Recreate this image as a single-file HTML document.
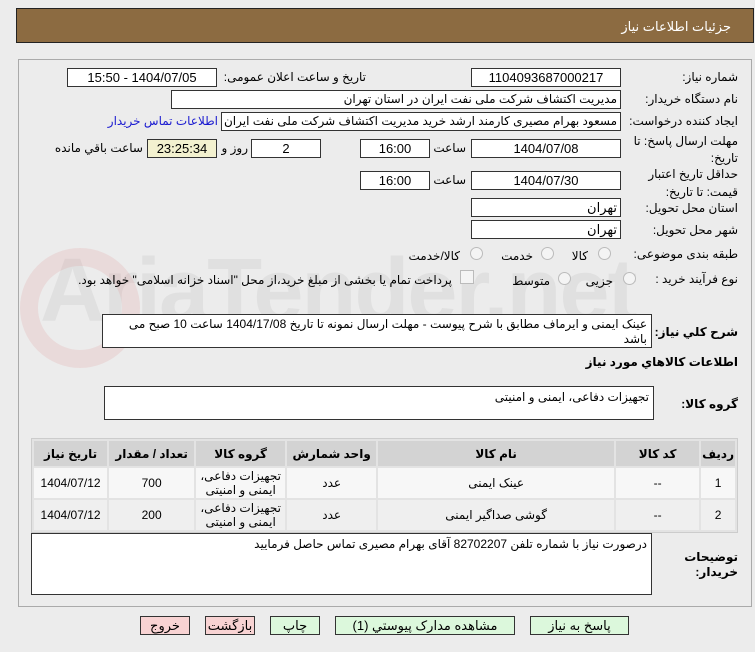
<!DOCTYPE html>
<html dir="rtl"><head><meta charset="utf-8"><style>
body{margin:0;width:755px;height:652px;background:#ececec;font-family:"Liberation Sans","DejaVu Sans",sans-serif;font-size:12px;color:#000;position:relative;overflow:hidden}
.a{position:absolute;white-space:nowrap}
.box{position:absolute;background:#fff;border:1px solid #333;box-sizing:border-box;height:19px;line-height:17px;text-align:center;font-size:13px}
.lbl{position:absolute;white-space:nowrap;font-size:12px;text-align:right}
.b{font-weight:bold}
.ta{position:absolute;background:#fff;border:1px solid #333;box-sizing:border-box;padding:2px 4px;font-size:12px;text-align:right;direction:rtl;line-height:16px}
.rad{position:absolute;width:11px;height:11px;border:1px solid #bbb;border-radius:50%;background:#f4f4f4}
table{position:absolute;left:31px;top:438px;width:707px;border-collapse:separate;border-spacing:2px;background:#e3e3e3;border:1px solid #ccc;direction:rtl;font-size:12px}
th{background:#d3d3d3;height:23px;font-weight:bold}
td{background:#f7f7f7;height:28px;text-align:center;line-height:14px}
tr.r2 td{background:#efefef}
.btn{position:absolute;top:616px;height:19px;border:1px solid #333;box-sizing:border-box;text-align:center;line-height:17px;font-size:13px}
</style></head><body>
<div class="a" style="left:16px;top:8px;width:738px;height:35px;background:#8c6b41;border:1px solid #222;box-sizing:border-box"></div>
<div class="a" style="right:24px;top:19px;color:#fff;font-size:13px">جزئیات اطلاعات نیاز</div>
<div class="a" style="left:18px;top:59px;width:734px;height:548px;border:1px solid #aaa;box-sizing:border-box"></div>
<div class="a" style="left:40px;top:240px;font-size:90px;font-weight:bold;color:rgba(180,180,180,0.2);direction:ltr;letter-spacing:-2px">AriaTender.net</div>
<div class="a" style="left:20px;top:248px;width:120px;height:120px;border:18px solid rgba(220,120,120,0.15);border-radius:50%;box-sizing:border-box"></div>

<div class="lbl" style="right:17px;top:70px">شماره نیاز:</div>
<div class="box" style="left:471px;top:68px;width:150px">1104093687000217</div>
<div class="lbl" style="right:389px;top:70px">تاریخ و ساعت اعلان عمومی:</div>
<div class="box" style="left:67px;top:68px;width:150px">1404/07/05 - 15:50</div>

<div class="lbl" style="right:17px;top:92px">نام دستگاه خریدار:</div>
<div class="box" style="left:171px;top:90px;width:450px;text-align:right;padding-right:3px;font-size:12px">مدیریت اکتشاف شرکت ملی نفت ایران در استان تهران</div>

<div class="lbl" style="right:17px;top:114px">ایجاد کننده درخواست:</div>
<div class="box" style="left:221px;top:112px;width:400px;text-align:right;padding-right:3px;overflow:hidden;font-size:12px">مسعود بهرام مصیری کارمند ارشد خرید مدیریت اکتشاف شرکت ملی نفت ایران در</div>
<div class="lbl" style="right:537px;top:114px;color:#1a1ad0">اطلاعات تماس خریدار</div>

<div class="lbl" style="right:17px;top:133px;line-height:17px">مهلت ارسال پاسخ: تا<br>تاریخ:</div>
<div class="box" style="left:471px;top:139px;width:150px">1404/07/08</div>
<div class="lbl" style="right:289px;top:141px">ساعت</div>
<div class="box" style="left:360px;top:139px;width:70px">16:00</div>
<div class="box" style="left:251px;top:139px;width:70px">2</div>
<div class="lbl" style="right:507px;top:141px">روز و</div>
<div class="box" style="left:147px;top:139px;width:70px;background:#f3f1cf">23:25:34</div>
<div class="lbl" style="right:612px;top:141px">ساعت باقي مانده</div>

<div class="lbl" style="right:17px;top:165px;line-height:18px">حداقل تاریخ اعتبار<br>قیمت: تا تاریخ:</div>
<div class="box" style="left:471px;top:171px;width:150px">1404/07/30</div>
<div class="lbl" style="right:289px;top:173px">ساعت</div>
<div class="box" style="left:360px;top:171px;width:70px">16:00</div>

<div class="lbl" style="right:17px;top:201px">استان محل تحویل:</div>
<div class="box" style="left:471px;top:198px;width:150px;text-align:right;padding-right:3px">تهران</div>
<div class="lbl" style="right:17px;top:223px">شهر محل تحویل:</div>
<div class="box" style="left:471px;top:220px;width:150px;text-align:right;padding-right:3px">تهران</div>

<div class="lbl" style="right:17px;top:247px">طبقه بندی موضوعی:</div>
<div class="rad" style="left:598px;top:247px"></div><div class="lbl" style="right:167px;top:249px">کالا</div>
<div class="rad" style="left:541px;top:247px"></div><div class="lbl" style="right:222px;top:249px">خدمت</div>
<div class="rad" style="left:470px;top:247px"></div><div class="lbl" style="right:295px;top:249px">کالا/خدمت</div>

<div class="lbl" style="right:17px;top:272px">نوع فرآیند خرید :</div>
<div class="rad" style="left:623px;top:272px"></div><div class="lbl" style="right:142px;top:274px">جزیی</div>
<div class="rad" style="left:558px;top:272px"></div><div class="lbl" style="right:205px;top:274px">متوسط</div>
<div class="a" style="left:460px;top:270px;width:12px;height:12px;border:1px solid #bbb;background:#f4f4f4"></div>
<div class="lbl" style="right:303px;top:273px">پرداخت تمام یا بخشی از مبلغ خرید،از محل "اسناد خزانه اسلامی" خواهد بود.</div>

<div class="lbl b" style="right:17px;top:325px">شرح کلي نياز:</div>
<div class="ta" style="left:102px;top:314px;width:550px;height:34px;line-height:15px">عینک ایمنی و ایرماف مطابق با شرح پیوست - مهلت ارسال نمونه تا تاریخ 1404/17/08 ساعت 10 صبح می باشد</div>
<div class="lbl b" style="right:17px;top:355px">اطلاعات کالاهاي مورد نياز</div>
<div class="lbl b" style="right:17px;top:397px">گروه کالا:</div>
<div class="ta" style="left:104px;top:386px;width:550px;height:34px">تجهیزات دفاعی، ایمنی و امنیتی</div>

<table>
<tr><th style="width:27px">رديف</th><th style="width:81px">کد کالا</th><th style="width:234px">نام کالا</th><th style="width:87px">واحد شمارش</th><th style="width:87px">گروه کالا</th><th style="width:83px">تعداد / مقدار</th><th>تاريخ نياز</th></tr>
<tr><td>1</td><td>--</td><td>عینک ایمنی</td><td>عدد</td><td>تجهیزات دفاعی،<br>ایمنی و امنیتی</td><td>700</td><td>1404/07/12</td></tr>
<tr class="r2"><td>2</td><td>--</td><td>گوشی صداگیر ایمنی</td><td>عدد</td><td>تجهیزات دفاعی،<br>ایمنی و امنیتی</td><td>200</td><td>1404/07/12</td></tr>
</table>

<div class="lbl b" style="right:17px;top:550px;line-height:15px">توضیحات<br>خریدار:</div>
<div class="ta" style="left:31px;top:533px;width:621px;height:62px">درصورت نیاز با شماره تلفن 82702207 آقای بهرام مصیری تماس حاصل فرمایید</div>

<div class="btn" style="left:140px;width:50px;background:#f8d3d3">خروج</div>
<div class="btn" style="left:205px;width:50px;background:#f8d3d3">بازگشت</div>
<div class="btn" style="left:270px;width:50px;background:#dcf8dc">چاپ</div>
<div class="btn" style="left:335px;width:180px;background:#dcf8dc">مشاهده مدارک پیوستي (1)</div>
<div class="btn" style="left:530px;width:99px;background:#dcf8dc">پاسخ به نياز</div>
</body></html>
